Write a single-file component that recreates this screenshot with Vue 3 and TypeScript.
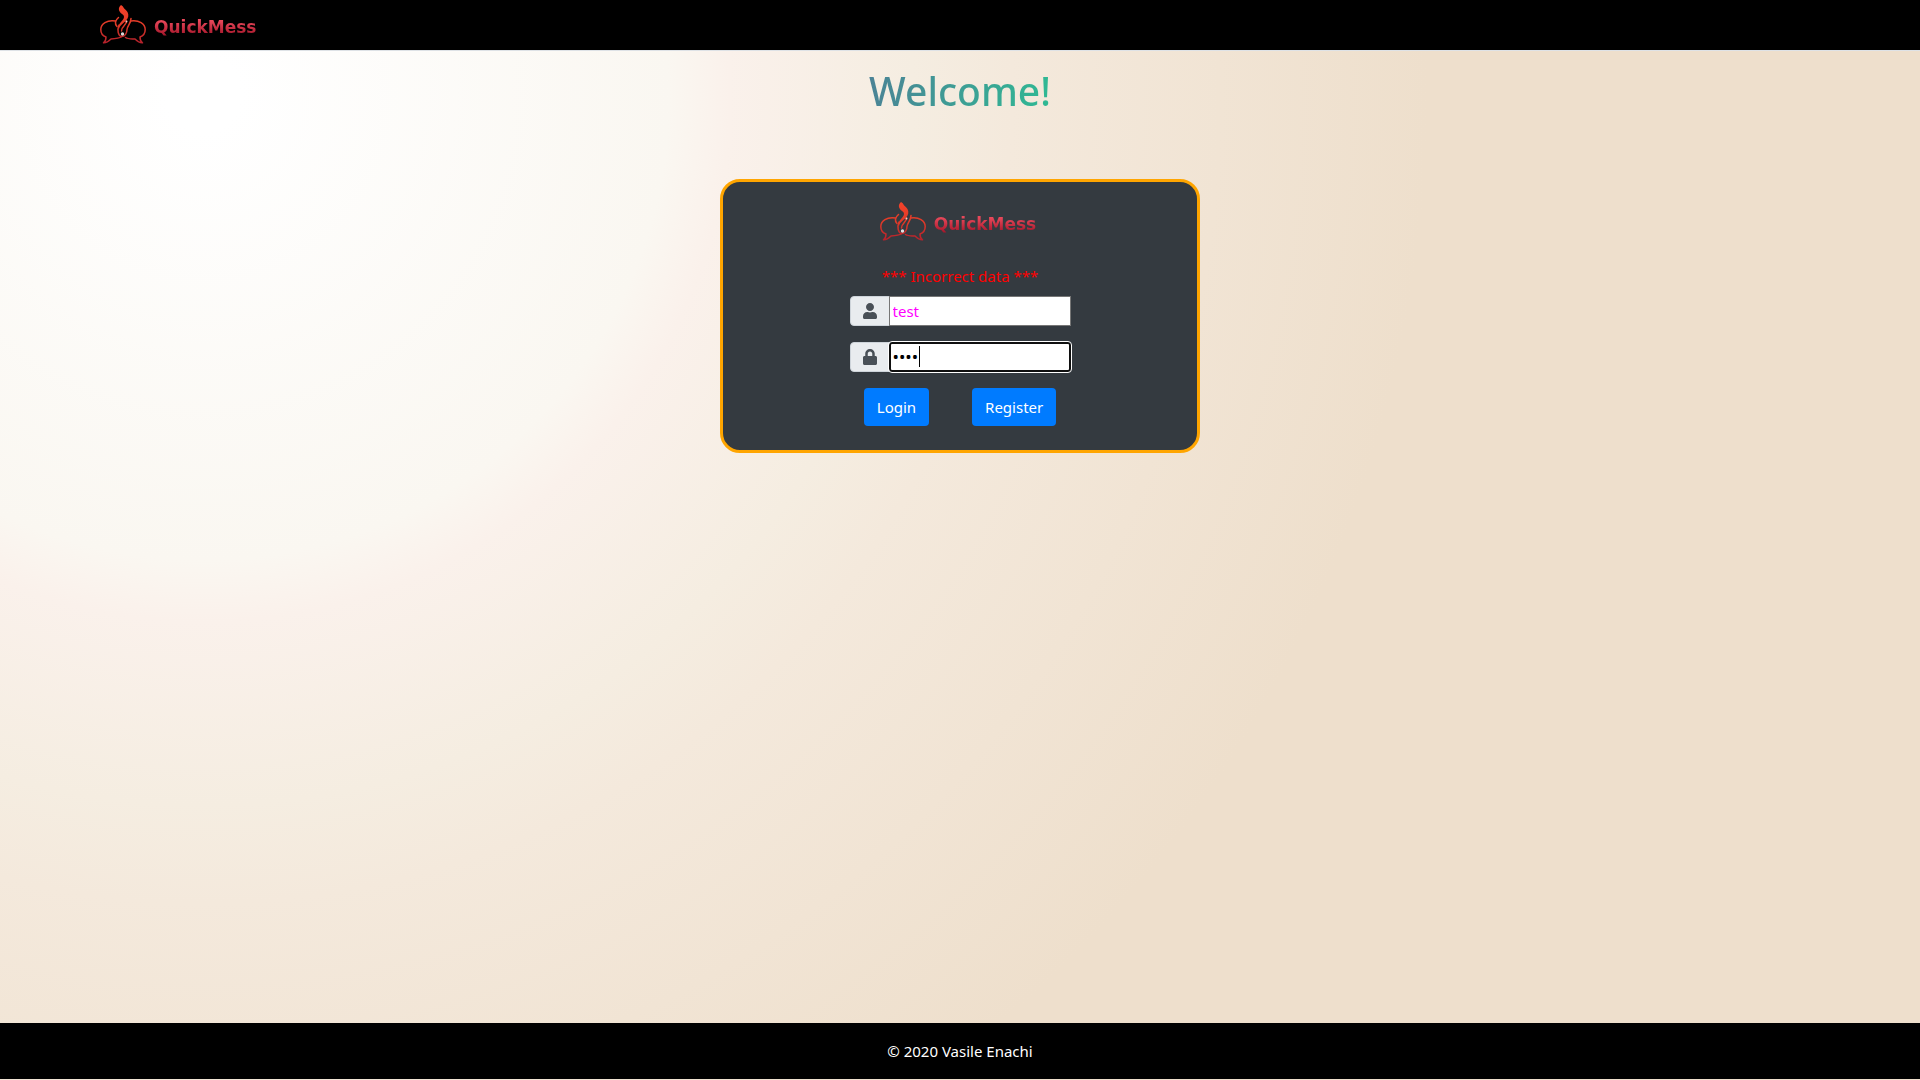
<script setup lang="ts">
import { defineComponent, h, onMounted, ref } from 'vue'

const username = ref('test')
const password = ref('pass')
const passwordField = ref<HTMLInputElement | null>(null)

const flame =
  'M21 0C19 2 18 4 20 7C21 9 24 9 24 12C24 15 20 17 19 20C18.500 22 18.500 23 19 24C20 20 24 18 26 15.500C28.500 13 29 10 27.500 7C26.500 5 24 4 23.500 2.500C22.800 1 22 .5 21 0Z'

const BrandLogo = defineComponent({
  props: { uid: { type: String, required: true } },
  setup(props) {
    return () =>
      h('span', { class: 'brand' }, [
        h('svg', { class: 'brand-mark', viewBox: '0 0 46 40', width: 46, height: 40, 'aria-hidden': 'true' }, [
          h('defs', [
            h('linearGradient', { id: props.uid, x1: 0, y1: 0, x2: 0, y2: 40, gradientUnits: 'userSpaceOnUse' }, [
              h('stop', { offset: '0', 'stop-color': '#f4432a' }),
              h('stop', { offset: '0.5', 'stop-color': '#e03a28' }),
              h('stop', { offset: '1', 'stop-color': '#b01e2c' }),
            ]),
          ]),
          h('g', { fill: 'none', stroke: `url(#${props.uid})`, 'stroke-width': 1.5, 'stroke-linejoin': 'round', 'stroke-linecap': 'round' }, [
            h('path', { d: 'M15.500 16C7 14.500 .8 19 .8 24.500C.8 28.500 3 31 6 32C6 34.500 5.500 36.500 3.500 37.800C7 38 9 36 11 34C15 33.800 19 33.500 22 31.500' }),
            h('path', { d: 'M30.500 16C39 14.500 45.200 19 45.200 24.500C45.200 28.500 43 31 40 32C40 34.500 40.500 36.500 42.500 37.800C39 38 37 36 35 34C31.500 33.800 28 34.200 25.500 32.500' }),
            h('path', { d: 'M18.500 12.500C15 15.500 14.500 18.500 17 21.500' }),
            h('path', { d: 'M19 20C17 25 18 31 21.500 31.500C25 31.500 27 28 27 24.500C27.500 20.500 31 18.500 31 13.500' }),
            h('path', { d: 'M26.500 16C27 20 21 21.500 21.500 26' }),
          ]),
          h('path', { d: flame, fill: `url(#${props.uid})` }),
          h('circle', { cx: 22.5, cy: 29, r: 1.7, fill: '#fff', opacity: 0.85 }),
          h('circle', { cx: 26.5, cy: 16.5, r: 1, fill: '#fff', opacity: 0.7 }),
        ]),
        h('span', { class: 'brand-name' }, 'QuickMess'),
      ])
  },
})

onMounted(() => passwordField.value?.focus())
</script>

<template>
  <div class="page">
    <header class="topbar">
      <a class="home" href="#"><BrandLogo uid="bar-flame" /></a>
    </header>
    <main class="content">
      <h1 class="welcome">Welcome!</h1>
      <form class="card" @submit.prevent>
        <BrandLogo uid="card-flame" />
        <p class="error" role="alert">*** Incorrect data ***</p>
        <div class="group">
          <label class="addon" for="user" aria-label="Username">
            <svg viewBox="0 0 448 512" width="14" height="16"><path fill="currentColor" d="M224 256c70.700 0 128-57.300 128-128S294.700 0 224 0 96 57.300 96 128s57.300 128 128 128zm89.600 32h-16.700c-22.200 10.200-46.900 16-72.900 16s-50.600-5.800-72.900-16h-16.700C60.200 288 0 348.200 0 422.400V464c0 26.500 21.500 48 48 48h352c26.500 0 48-21.500 48-48v-41.600c0-74.200-60.200-134.400-134.400-134.400z" /></svg>
          </label>
          <input id="user" v-model="username" class="field user" type="text" />
        </div>
        <div class="group">
          <label class="addon" for="pass" aria-label="Password">
            <svg viewBox="0 0 448 512" width="14" height="16"><path fill="currentColor" d="M400 224h-24v-72C376 68.200 307.800 0 224 0S72 68.200 72 152v72H48c-26.500 0-48 21.500-48 48v192c0 26.500 21.500 48 48 48h352c26.500 0 48-21.500 48-48V272c0-26.500-21.500-48-48-48zm-104 0H152v-72c0-39.700 32.300-72 72-72s72 32.300 72 72v72z" /></svg>
          </label>
          <input id="pass" ref="passwordField" v-model="password" class="field secret" type="password" />
          <span v-if="password.length === 4" class="caret" aria-hidden="true"></span>
        </div>
        <div class="actions">
          <button class="btn" type="submit">Login</button>
          <button class="btn" type="button">Register</button>
        </div>
      </form>
    </main>
    <footer class="footer">© 2020 Vasile Enachi</footer>
  </div>
</template>

<style>
body {
  margin: 0;
  background: #eedfcc;
}
</style>

<style scoped>
.page {
  box-sizing: border-box;
  display: flex;
  flex-direction: column;
  min-height: 100vh;
  padding-bottom: 1px;
  font: 15px/24px 'Noto Sans', 'Open Sans', sans-serif;
  background: radial-gradient(circle 1224px at 10.6% 8.8%, #fff 0%, #fff 3%, #faf7f1 38%, #faf1eb 43%, #f5ede1 58%, #f4e9dc 66%, #eedfcc 100%);
}
.topbar {
  display: flex;
  align-items: center;
  height: 50px;
  padding-left: 100px;
  border-bottom: 1px solid #dee2e6;
  background: #000;
}
.home {
  text-decoration: none;
}
:deep(.brand),
.brand {
  display: flex;
  align-items: center;
  gap: 8px;
  padding-right: 4px;
}
:deep(.brand-name) {
  padding-top: 4px;
  font: bold 17px/24px 'DejaVu Sans', sans-serif;
  background: linear-gradient(#e8485a 35%, #a8182c 85%);
  background-clip: text;
  color: transparent;
}
.content {
  flex: 1;
  display: flex;
  flex-direction: column;
  align-items: center;
}
.welcome {
  margin: 12px 0 60px;
  padding: 0 16px;
  font-size: 39px;
  line-height: 56px;
  font-weight: 500;
  background: linear-gradient(100deg, #4e7d96, #2cbf93);
  background-clip: text;
  color: transparent;
}
.card {
  box-sizing: border-box;
  display: flex;
  flex-direction: column;
  align-items: center;
  width: 25%;
  min-width: 320px;
  padding: 20px 0 24px;
  border: 3px solid orange;
  border-radius: 20px;
  background: #343a40;
}
.error {
  margin: 22px 0 8px;
  color: red;
}
.group {
  position: relative;
  display: flex;
  height: 30px;
  margin-bottom: 16px;
}
.addon {
  box-sizing: border-box;
  display: flex;
  align-items: center;
  justify-content: center;
  width: 40px;
  margin-right: -1px;
  border: 1px solid #ced4da;
  border-radius: 4px 0 0 4px;
  background: #e9ecef;
  color: #495057;
}
.field {
  box-sizing: border-box;
  width: 182px;
  padding: 0 3px;
  border: 1px solid #767676;
  background: #fff;
  color: #000;
  font: inherit;
  caret-color: transparent;
}
.user {
  color: #f0f;
}
.secret {
  font-size: 17px;
}
.field:focus {
  padding: 0 2px;
  border: 2px solid #101010;
  border-radius: 3px;
  outline: 1px solid #fff;
}
.caret {
  display: none;
  position: absolute;
  left: 69px;
  top: 4px;
  width: 1px;
  height: 21px;
  background: #000;
}
.secret:focus + .caret {
  display: block;
}
.actions {
  display: flex;
  gap: 43px;
}
.btn {
  height: 38px;
  padding: 0 13px;
  border: 0;
  border-radius: 4px;
  background: #007bff;
  color: #fff;
  font: inherit;
}
.footer {
  padding: 16px 0;
  background: #000;
  color: #fff;
  text-align: center;
}
</style>
